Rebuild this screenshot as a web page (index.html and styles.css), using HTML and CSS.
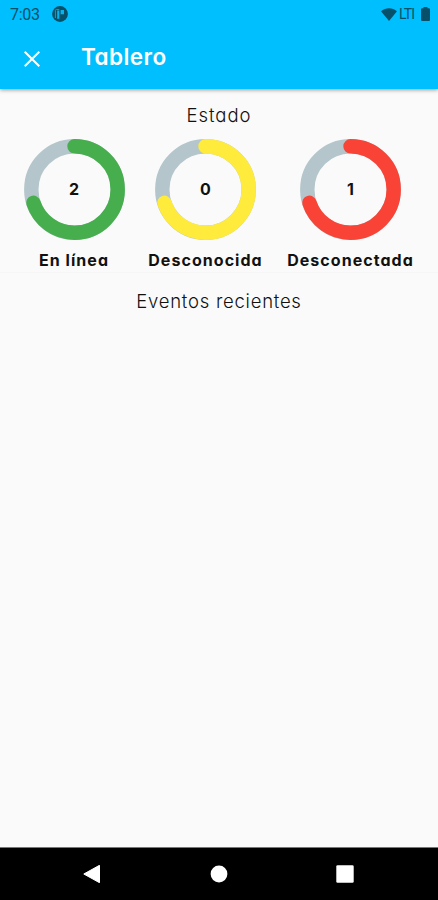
FILE: index.html
```html
<!DOCTYPE html>
<html lang="es">
<head>
<meta charset="UTF-8" />
<meta name="viewport" content="width=device-width, initial-scale=1" />
<title>Tablero</title>
<link rel="stylesheet" href="styles.css">
</head>
<body>

<header class="cabecera">
  <!-- Barra de estado -->
  <div class="barra-estado">
    <span class="hora">7:03</span>
    <svg class="icono-app" viewBox="0 0 16 16">
      <circle cx="8" cy="8" r="7.9" fill="#065069" />
      <path d="M7.300 3.500H4.400Q3.400 3.500 3.400 4.500V12" fill="none" stroke="#0a9fd0" stroke-width="1" />
      <path d="M5.200 4.500H7.300V12.800H5.200Z" fill="#03b4ee" />
      <path d="M8.600 4H12V8.300H8.600Z" fill="#03b4ee" />
    </svg>
    <svg class="icono-wifi" viewBox="0 0 16 13">
      <path d="M0 3.200C4.500-.8 11.500-.8 16 3.200L8 13Z" fill="#065069" />
    </svg>
    <span class="red">LTI</span>
    <svg class="icono-bateria" viewBox="0 0 9 14">
      <path d="M2.500 1.200V0H6.500V1.200H8Q9 1.200 9 2.200V13Q9 14 8 14H1Q0 14 0 13V2.200Q0 1.200 1 1.200Z" fill="#065069" />
    </svg>
  </div>
  <!-- Barra de título -->
  <div class="barra-titulo">
    <svg class="cerrar" viewBox="0 0 16 16">
      <path d="M.7 .7L15.300 15.300M15.300 .7L.7 15.300" stroke="#fff" stroke-width="2" />
    </svg>
    <h1>Tablero</h1>
  </div>
</header>

<main class="contenido">
  <section class="estado">
    <h2 class="titulo-estado">Estado</h2>
    <div class="indicadores">
      <div class="indicador en-linea">
        <div class="anillo">
          <svg viewBox="0 0 101 101">
            <circle class="pista" cx="50.500" cy="50.500" r="43.200" />
            <circle class="arco" cx="50.500" cy="50.500" r="43.200" pathLength="100" transform="rotate(-90 50.500 50.500)" />
          </svg>
          <span class="valor">2</span>
        </div>
        <p>En línea</p>
      </div>
      <div class="indicador desconocida">
        <div class="anillo">
          <svg viewBox="0 0 101 101">
            <circle class="pista" cx="50.500" cy="50.500" r="43.200" />
            <circle class="arco" cx="50.500" cy="50.500" r="43.200" pathLength="100" transform="rotate(-90 50.500 50.500)" />
          </svg>
          <span class="valor">0</span>
        </div>
        <p>Desconocida</p>
      </div>
      <div class="indicador desconectada">
        <div class="anillo">
          <svg viewBox="0 0 101 101">
            <circle class="pista" cx="50.500" cy="50.500" r="43.200" />
            <circle class="arco" cx="50.500" cy="50.500" r="43.200" pathLength="100" transform="rotate(-90 50.500 50.500)" />
          </svg>
          <span class="valor">1</span>
        </div>
        <p>Desconectada</p>
      </div>
    </div>
  </section>

  <section class="eventos">
    <h2 class="titulo-eventos">Eventos recientes</h2>
  </section>
</main>

<!-- Navegación del sistema -->
<nav class="navegacion">
  <svg viewBox="0 0 18 18"><path d="M16.500 .3V17.700L.8 9Z" fill="#fff" stroke="#fff" stroke-linejoin="round" /></svg>
  <svg viewBox="0 0 18 18"><circle cx="9" cy="9" r="8.400" fill="#fff" /></svg>
  <svg viewBox="0 0 18 18"><rect x=".3" y=".3" width="17.400" height="17.400" rx="1.300" fill="#fff" /></svg>
</nav>

</body>
</html>
```
FILE: styles.css
```css
* {
  box-sizing: border-box;
}
body {
  margin: 0;
  height: 900px;
  display: flex;
  flex-direction: column;
  overflow: hidden;
  background: #fafafa;
  color: #111;
  font-family: Inter, Roboto, sans-serif;
  font-feature-settings: "cv11";
}
h1, h2, p {
  margin: 0;
  white-space: nowrap;
}
svg {
  display: block;
}
.cabecera {
  position: relative;
  height: 89px;
  background: #00bfff;
  box-shadow: 0 1px 4px rgba(0, 0, 0, 0.4);
}
.barra-estado {
  display: flex;
  align-items: center;
  height: 28px;
  padding: 0 8px 0 10px;
  color: #065069;
  font-family: Roboto, sans-serif;
}
.hora {
  width: 42px;
  font-size: 16px;
  letter-spacing: -0.3px;
}
.icono-app {
  width: 16px;
  height: 16px;
}
.icono-wifi {
  width: 16px;
  height: 13px;
  margin-left: auto;
}
.red {
  width: 18px;
  margin: 0 4px 0 2px;
  font-size: 14px;
  letter-spacing: -0.9px;
}
.icono-bateria {
  width: 9px;
  height: 14px;
}
.barra-titulo {
  display: flex;
  align-items: center;
  height: 61px;
  padding-left: 24px;
}
.cerrar {
  width: 16px;
  height: 16px;
}
.barra-titulo h1 {
  margin: -5px 0 0 41px;
  color: #fff;
  font-size: 22.5px;
  font-weight: 600;
  letter-spacing: 0.45px;
}
.estado {
  height: 184px;
  padding-top: 14px;
  border-bottom: 1px solid #f6f6f6;
}
.titulo-estado, .titulo-eventos {
  text-align: center;
  font-size: 18.5px;
  font-weight: 300;
  line-height: 24px;
}
.titulo-estado {
  letter-spacing: 1px;
}
.titulo-eventos {
  letter-spacing: 0.75px;
}
.indicadores {
  display: flex;
  justify-content: space-between;
  padding: 12px 24px 0;
}
.indicador {
  display: flex;
  flex-direction: column;
  align-items: center;
}
.en-linea {
  width: 100px;
}
.desconocida {
  width: 114px;
}
.desconectada {
  width: 127px;
}
.anillo {
  display: grid;
  place-items: center;
  width: 101px;
  height: 101px;
}
.anillo svg, .valor {
  grid-area: 1 / 1;
}
.anillo svg {
  width: 101px;
  height: 101px;
}
.anillo circle {
  fill: none;
  stroke-width: 14.4;
}
.pista {
  stroke: #b4c6cb;
}
.arco {
  stroke-linecap: round;
  stroke-dasharray: 70 100;
}
.en-linea .arco {
  stroke: #46ae4c;
}
.desconocida .arco {
  stroke: #ffeb3b;
}
.desconectada .arco {
  stroke: #f94336;
}
.valor {
  margin-bottom: 2px;
  font-size: 16px;
  font-weight: 700;
}
.indicador p {
  margin-top: 8px;
  font-size: 16px;
  font-weight: 700;
  line-height: 24px;
  letter-spacing: 1.05px;
}
.eventos {
  padding-top: 16px;
}
.navegacion {
  display: flex;
  align-items: center;
  justify-content: space-between;
  height: 53px;
  margin-top: auto;
  padding: 0 84px 0 83px;
  border-top: 1px solid #777;
  background: #000;
}
.navegacion svg {
  width: 18px;
  height: 18px;
}
```
